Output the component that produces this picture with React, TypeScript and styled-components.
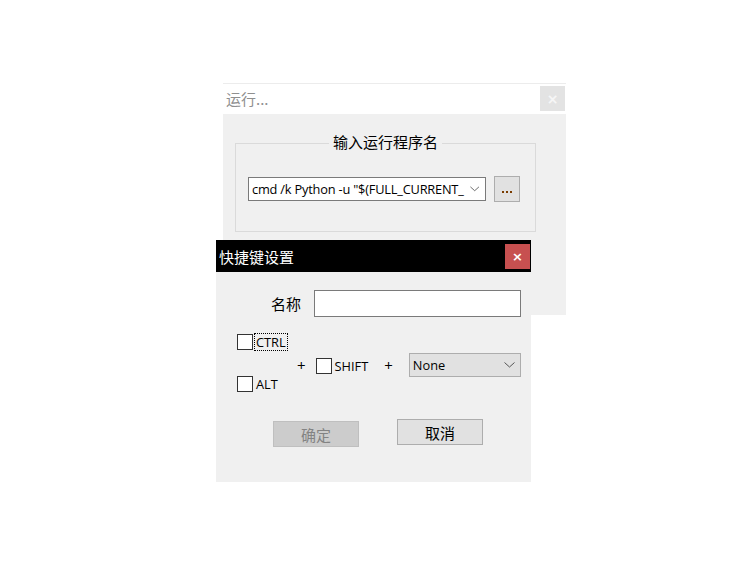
import React from "react";
import styled, { createGlobalStyle } from "styled-components";

const Global = createGlobalStyle`
  html, body { margin: 0; padding: 0; background: #ffffff; }
  body { font-family: "Noto Sans", "Noto Sans CJK SC", sans-serif; }
  * { box-sizing: border-box; }
`;

const Desktop = styled.div`
  position: relative;
  width: 754px;
  height: 565px;
  overflow: hidden;
  background: #ffffff;
`;

const Window = styled.div<{ $left: number; $top: number; $w: number; $h: number }>`
  position: absolute;
  left: ${(p) => p.$left}px;
  top: ${(p) => p.$top}px;
  width: ${(p) => p.$w}px;
  height: ${(p) => p.$h}px;
  display: flex;
  flex-direction: column;
  background: #f0f0f0;
`;

const BackTitleBar = styled.div`
  height: 31px;
  flex: none;
  background: #ffffff;
  border-top: 1px solid #ececec;
  display: flex;
  align-items: flex-start;
  justify-content: space-between;
  padding-left: 3px;
`;

const BackTitle = styled.span`
  font-family: "Noto Sans CJK SC", sans-serif;
  font-size: 15px;
  line-height: 30px;
  color: #8f8f8f;
`;

const BackClose = styled.div`
  width: 25px;
  height: 25px;
  margin: 2px 1px 0 0;
  background: #e3e3e3;
  color: #f6f6f6;
  font-family: "DejaVu Sans", sans-serif;
  font-size: 14px;
  font-weight: bold;
  display: flex;
  align-items: center;
  justify-content: center;
`;

const BackBody = styled.div`
  flex: 1;
  padding: 20px 30px 0 12px;
`;

const GroupBox = styled.fieldset`
  margin: 0;
  height: 98px;
  border: 1px solid #dadada;
  padding: 0 12px 0 12px;
`;

const Legend = styled.legend`
  margin: 0 auto;
  padding: 0 4px;
  font-family: "Noto Sans CJK SC", sans-serif;
  font-size: 15px;
  line-height: 18px;
  color: #000;
  transform: translateY(-1px);
`;

const ComboRow = styled.div`
  display: flex;
  align-items: center;
  gap: 8px;
  margin-top: 24px;
`;

const Combo = styled.div`
  width: 238px;
  height: 24px;
  border: 1px solid #7a7a7a;
  background: #ffffff;
  display: flex;
  align-items: center;
  padding: 0 6px 0 3px;
  gap: 6px;
`;

const ComboText = styled.span`
  flex: 1;
  white-space: nowrap;
  font-family: "Open Sans", sans-serif;
  font-size: 12.8px;
  letter-spacing: -0.2px;
  color: #000;
`;

const SmallButton = styled.div`
  width: 26px;
  height: 26px;
  background: #e1e1e1;
  border: 1px solid #adadad;
  display: flex;
  align-items: center;
  justify-content: center;
  gap: 2px;
  padding-top: 5px;
`;

const Dot = styled.span`
  width: 2px;
  height: 2px;
  background: #7a3c00;
`;

const FrontTitleBar = styled.div`
  height: 32px;
  flex: none;
  background: #000000;
  display: flex;
  align-items: center;
  justify-content: space-between;
  padding-left: 3px;
`;

const FrontTitle = styled.span`
  font-family: "Noto Sans CJK SC", sans-serif;
  font-size: 15px;
  color: #ffffff;
`;

const RedClose = styled.div`
  width: 25px;
  height: 25px;
  margin-right: 1px;
  background: #c75050;
  color: #ffffff;
  font-family: "DejaVu Sans", sans-serif;
  font-size: 13px;
  font-weight: bold;
  display: flex;
  align-items: center;
  justify-content: center;
`;

const FrontBody = styled.div`
  flex: 1;
  display: flex;
  flex-direction: column;
  padding: 18px 10px 0 21px;
`;

const NameRow = styled.div`
  display: flex;
  align-items: center;
  padding-left: 34px;
  gap: 13px;
`;

const Label = styled.span`
  font-family: "Noto Sans CJK SC", sans-serif;
  font-size: 15px;
  color: #000;
`;

const TextInput = styled.div`
  width: 207px;
  height: 27px;
  border: 1px solid #7a7a7a;
  background: #ffffff;
`;

const KeysRow = styled.div`
  display: flex;
  align-items: center;
  margin-top: 17px;
`;

const ModColumn = styled.div`
  display: flex;
  flex-direction: column;
  gap: 26px;
  width: 60px;
`;

const Check = styled.div`
  display: flex;
  align-items: center;
  gap: 2px;
`;

const Box = styled.span`
  width: 16px;
  height: 16px;
  border: 1px solid #333333;
  background: #ffffff;
  flex: none;
`;

const CheckLabel = styled.span<{ $focus?: boolean }>`
  font-family: "Open Sans", sans-serif;
  font-size: 12.8px;
  line-height: 16px;
  color: #000;
  padding: 0 1px;
  outline: ${(p) => (p.$focus ? "1px dotted #000" : "none")};
`;

const Plus = styled.span<{ $ml: number }>`
  margin-left: ${(p) => p.$ml}px;
  font-family: "Open Sans", sans-serif;
  font-size: 15px;
  line-height: 18px;
  color: #000;
  margin-top: 3px;
`;

const Middle = styled.div<{ $ml: number }>`
  margin-left: ${(p) => p.$ml}px;
  margin-top: 6px;
`;

const Select = styled.div<{ $ml: number }>`
  margin-left: ${(p) => p.$ml}px;
  margin-top: 3px;
  width: 112px;
  height: 24px;
  background: #e1e1e1;
  border: 1px solid #adadad;
  display: flex;
  align-items: center;
  justify-content: space-between;
  padding: 0 5px 0 3px;
`;

const SelectText = styled.span`
  font-family: "Open Sans", sans-serif;
  font-size: 12.8px;
  color: #000;
`;

const ButtonRow = styled.div`
  display: flex;
  align-items: flex-start;
  gap: 38px;
  margin-top: 27px;
  padding-left: 36px;
`;

const DialogButton = styled.div<{ $disabled?: boolean }>`
  width: 86px;
  height: 26px;
  margin-top: ${(p) => (p.$disabled ? 2 : 0)}px;
  background: ${(p) => (p.$disabled ? "#cccccc" : "#e1e1e1")};
  border: 1px solid ${(p) => (p.$disabled ? "#bfbfbf" : "#adadad")};
  color: ${(p) => (p.$disabled ? "#838383" : "#000")};
  font-family: "Noto Sans CJK SC", sans-serif;
  font-size: 15px;
  display: flex;
  align-items: center;
  justify-content: center;
`;

const Chevron = ({ color = "#555" }: { color?: string }) => (
  <svg width="11" height="6" viewBox="0 0 11 6" fill="none">
    <path d="M0.5 0.5 L5.5 5 L10.5 0.5" stroke={color} strokeWidth="1" />
  </svg>
);

export default function App() {
  return (
    <Desktop>
      <Global />
      <Window $left={223} $top={83} $w={343} $h={232}>
        <BackTitleBar>
          <BackTitle>运行...</BackTitle>
          <BackClose>×</BackClose>
        </BackTitleBar>
        <BackBody>
          <GroupBox>
            <Legend>输入运行程序名</Legend>
            <ComboRow>
              <Combo>
                <ComboText>cmd /k Python -u "$(FULL_CURRENT_</ComboText>
                <Chevron />
              </Combo>
              <SmallButton>
                <Dot />
                <Dot />
                <Dot />
              </SmallButton>
            </ComboRow>
          </GroupBox>
        </BackBody>
      </Window>

      <Window $left={216} $top={240} $w={315} $h={242}>
        <FrontTitleBar>
          <FrontTitle>快捷键设置</FrontTitle>
          <RedClose>×</RedClose>
        </FrontTitleBar>
        <FrontBody>
          <NameRow>
            <Label>名称</Label>
            <TextInput />
          </NameRow>
          <KeysRow>
            <ModColumn>
              <Check>
                <Box />
                <CheckLabel $focus>CTRL</CheckLabel>
              </Check>
              <Check>
                <Box />
                <CheckLabel>ALT</CheckLabel>
              </Check>
            </ModColumn>
            <Plus $ml={0}>+</Plus>
            <Middle $ml={10}>
              <Check>
                <Box />
                <CheckLabel>SHIFT</CheckLabel>
              </Check>
            </Middle>
            <Plus $ml={15}>+</Plus>
            <Select $ml={16}>
              <SelectText>None</SelectText>
              <Chevron />
            </Select>
          </KeysRow>
          <ButtonRow>
            <DialogButton $disabled>确定</DialogButton>
            <DialogButton>取消</DialogButton>
          </ButtonRow>
        </FrontBody>
      </Window>
    </Desktop>
  );
}
